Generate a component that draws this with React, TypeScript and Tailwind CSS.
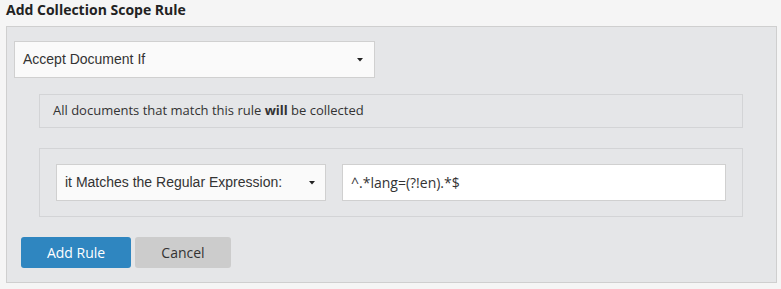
import { useState } from 'react';

function Caret() {
  return (
    <svg width="6" height="4" viewBox="0 0 6 4" className="shrink-0">
      <path d="M0 0h6L3 3.5z" fill="#222" />
    </svg>
  );
}

export default function App() {
  const [action] = useState('Accept Document If');
  const [condition] = useState('it Matches the Regular Expression:');
  const [pattern, setPattern] = useState('^.*lang=(?!en).*$');

  return (
    <div className="w-[781px] h-[289px] bg-[#f5f5f5] text-[#333] font-['Open_Sans',sans-serif] overflow-hidden">
      <div className="px-[6px] pt-[1px] h-[26px] text-[14px] font-bold leading-[18px] text-[#222]">
        Add Collection Scope Rule
      </div>
      <div className="mx-[6px] w-[771px] h-[257px] border border-[#cfcfcf] bg-[#e5e6e8] pt-[14px] px-[7px]">
        {/* action select */}
        <div className="w-[361px] h-[37px] bg-[#fafafa] border border-[#d0d0d0] flex items-center justify-between pl-[8px] pr-[11px] font-['Liberation_Sans',Arial,sans-serif] text-[14px] text-[#333]">
          <span>{action}</span>
          <Caret />
        </div>

        <div className="ml-[25px] mr-[26px] mt-[16px] h-[34px] border border-[#d3d4d6] flex items-center pl-[13px] text-[13px] text-[#333]">
          <span>
            All documents that match this rule <b className="font-bold">will</b> be collected
          </span>
        </div>

        <div className="ml-[25px] mr-[26px] mt-[20px] h-[69px] border border-[#d3d4d6] flex items-center gap-[16px] pl-[16px]">
          <div className="w-[270px] h-[37px] bg-[#fafafa] border border-[#d0d0d0] flex items-center justify-between pl-[8px] pr-[10px] font-['Liberation_Sans',Arial,sans-serif] text-[14px] text-[#333]">
            <span>{condition}</span>
            <Caret />
          </div>
          <input
            value={pattern}
            onChange={(e) => setPattern(e.target.value)}
            className="w-[384px] h-[37px] bg-white border border-[#d0d0d0] pl-[8px] text-[14px] text-[#333] outline-none font-['Open_Sans',sans-serif]"
          />
        </div>

        <div className="flex gap-[4px] mt-[20px] ml-[7px]">
          <button
            type="button"
            className="w-[110px] h-[31px] rounded-[3px] bg-[#2f86c0] text-white text-[14px]"
          >
            Add Rule
          </button>
          <button
            type="button"
            className="w-[96px] h-[31px] rounded-[3px] bg-[#cccccc] text-[#333] text-[14px]"
          >
            Cancel
          </button>
        </div>
      </div>
    </div>
  );
}
